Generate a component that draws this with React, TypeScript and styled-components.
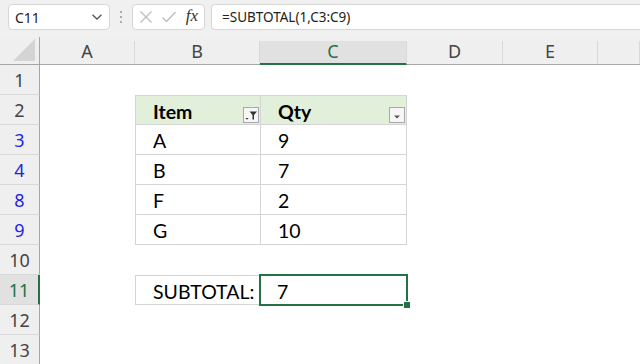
import React from "react";
import styled, { createGlobalStyle, css } from "styled-components";

const GlobalStyle = createGlobalStyle`
  html, body { margin: 0; padding: 0; background: #ffffff; }
  body { font-family: "Noto Sans", "Open Sans", sans-serif; overflow: hidden; }
  * { box-sizing: border-box; }
`;

const GREEN = "#217346";

const Window = styled.div`
  width: 640px;
  height: 364px;
  display: flex;
  flex-direction: column;
  background: #ffffff;
  overflow: hidden;
`;

const FormulaBar = styled.div`
  height: 37px;
  flex: none;
  display: flex;
  align-items: flex-start;
  padding: 4px 0 0 8px;
  background: #f0f0f0;
`;

const BoxBase = styled.div`
  height: 26px;
  background: #ffffff;
  border: 1px solid #d6d6d6;
  border-radius: 4px;
  display: flex;
  align-items: center;
`;

const NameBox = styled(BoxBase)`
  width: 102px;
  padding: 0 6px 0 6px;
  justify-content: space-between;
  font-size: 14px;
  color: #222;
`;

const Grip = styled.div`
  width: 22px;
  height: 26px;
  display: flex;
  align-items: center;
  justify-content: center;
`;

const FxBox = styled(BoxBase)`
  width: 73px;
  padding: 0 6px 0 6px;
  justify-content: space-between;
`;

const FxText = styled.span`
  font-family: "Liberation Serif", "DejaVu Serif", serif;
  font-style: italic;
  font-size: 17px;
  color: #333;
  margin-top: -2px;
`;

const FormulaInput = styled(BoxBase)`
  flex: 1;
  margin-left: 6px;
  margin-right: -8px;
  padding-left: 10px;
  font-size: 13.5px;
  color: #222;
  border-right: none;
  border-radius: 4px 0 0 4px;
`;

const Sheet = styled.div`
  flex: 1;
  display: flex;
  flex-direction: column;
`;

const HeaderRow = styled.div`
  height: 28px;
  display: flex;
  background: #efefef;
  border-bottom: 1px solid #a6a6a6;
`;

const Corner = styled.div`
  width: 40px;
  flex: none;
  border-right: 1px solid #a6a6a6;
  position: relative;
  display: flex;
  align-items: flex-end;
  justify-content: flex-end;
  padding: 0 4px 3px 0;
`;

const ColHeader = styled.div<{ $w?: number; $sel?: boolean }>`
  ${(p) => (p.$w ? css`width: ${p.$w}px; flex: none;` : css`flex: 1;`)}
  display: flex;
  align-items: center;
  justify-content: center;
  font-size: 18px;
  color: #444;
  border-right: 1px solid #d8d8d8;
  margin-top: 4px;
  padding-bottom: 4px;
  ${(p) =>
    p.$sel &&
    css`
      background: #e1e1e1;
      color: ${GREEN};
      border-bottom: 2px solid ${GREEN};
      margin-bottom: -1px;
      padding-bottom: 3px;
    `}
`;

const Row = styled.div`
  height: 30px;
  flex: none;
  display: flex;
`;

const RowHeader = styled.div<{ $blue?: boolean; $sel?: boolean }>`
  width: 40px;
  flex: none;
  display: flex;
  align-items: center;
  justify-content: center;
  background: #efefef;
  border-right: 1px solid #a6a6a6;
  border-bottom: 1px solid #d8d8d8;
  font-size: 18px;
  color: ${(p) => (p.$blue ? "#1f1fe6" : "#444")};
  ${(p) =>
    p.$sel &&
    css`
      background: #e1e1e1;
      color: ${GREEN};
      border-right: 2px solid ${GREEN};
    `}
`;

type Variant = "none" | "head" | "body";

const Cell = styled.div<{ $w?: number; $v?: Variant; $last?: boolean; $top?: boolean }>`
  ${(p) => (p.$w ? css`width: ${p.$w}px; flex: none;` : css`flex: 1;`)}
  position: relative;
  display: flex;
  align-items: center;
  padding-left: 17px;
  font-family: "Lato", "Noto Sans", sans-serif;
  font-size: 19.5px;
  color: #000;
  ${(p) =>
    p.$v && p.$v !== "none" &&
    css`
      border-bottom: 1px solid #d4d4d4;
      border-left: 1px solid #d4d4d4;
    `}
  ${(p) => p.$top && css`border-top: 1px solid #d4d4d4;`}
  ${(p) => p.$last && css`border-right: 1px solid #d4d4d4;`}
  ${(p) =>
    p.$v === "head" &&
    css`
      background: #e2efda;
      font-weight: 700;
    `}
`;

const CellText = styled.span`
  margin-top: 2px;
`;

const FilterButton = styled.div`
  position: absolute;
  right: 1px;
  top: 11px;
  width: 16px;
  height: 16px;
  border: 1px solid #a9a9a9;
  background: #f6f6f6;
  display: flex;
  align-items: center;
  justify-content: center;
`;

const Selection = styled.div`
  position: absolute;
  left: -1px;
  top: -1px;
  right: -1px;
  bottom: -1px;
  border: 2px solid ${GREEN};
  pointer-events: none;
`;

const FillHandle = styled.div`
  position: absolute;
  right: -4px;
  bottom: -4px;
  width: 6px;
  height: 6px;
  background: ${GREEN};
  border-left: 1px solid #fff;
  border-top: 1px solid #fff;
  box-sizing: content-box;
`;

const COLS = [
  { key: "A", w: 95 },
  { key: "B", w: 125 },
  { key: "C", w: 147 },
  { key: "D", w: 96 },
  { key: "E", w: 95 },
  { key: "F", w: 0 },
];

type RowDef = {
  n: number;
  b?: string;
  c?: string;
  kind?: "head" | "body" | "total";
  blue?: boolean;
};

const ROWS: RowDef[] = [
  { n: 1 },
  { n: 2, b: "Item", c: "Qty", kind: "head" },
  { n: 3, b: "A", c: "9", kind: "body", blue: true },
  { n: 4, b: "B", c: "7", kind: "body", blue: true },
  { n: 8, b: "F", c: "2", kind: "body", blue: true },
  { n: 9, b: "G", c: "10", kind: "body", blue: true },
  { n: 10 },
  { n: 11, b: "SUBTOTAL:", c: "7", kind: "total" },
  { n: 12 },
  { n: 13 },
];

const Chevron = () => (
  <svg width="12" height="8" viewBox="0 0 12 8">
    <path d="M1.5 1.8 L6 6 L10.5 1.8" fill="none" stroke="#555" strokeWidth="1.3" />
  </svg>
);

const Dots = () => (
  <svg width="4" height="14" viewBox="0 0 4 14">
    <circle cx="2" cy="2" r="1.1" fill="#9a9a9a" />
    <circle cx="2" cy="7" r="1.1" fill="#9a9a9a" />
    <circle cx="2" cy="12" r="1.1" fill="#9a9a9a" />
  </svg>
);

const Cross = () => (
  <svg width="14" height="14" viewBox="0 0 14 14">
    <path d="M1.5 1.5 L12.5 12.5 M12.5 1.5 L1.5 12.5" stroke="#bdbdbd" strokeWidth="1.3" fill="none" />
  </svg>
);

const Check = () => (
  <svg width="16" height="14" viewBox="0 0 16 14">
    <path d="M1.5 7.5 L5.5 11.5 L14.5 2" stroke="#bdbdbd" strokeWidth="1.3" fill="none" />
  </svg>
);

const CornerTriangle = () => (
  <svg width="22" height="22" viewBox="0 0 22 22">
    <path d="M22 0 L22 22 L0 22 Z" fill="#d4d4d4" />
  </svg>
);

const FunnelIcon = () => (
  <svg width="14" height="14" viewBox="0 0 14 14">
    <path d="M5.5 3.5 H13 L10 7 V11.5 H8.5 V7 Z" fill="#333" />
    <path d="M1.5 10 H4.5 L3 11.7 Z" fill="#333" />
  </svg>
);

const ArrowIcon = () => (
  <svg width="14" height="14" viewBox="0 0 14 14">
    <path d="M4 7.5 H10 L7 10.5 Z" fill="#555" />
  </svg>
);

export default function App() {
  return (
    <>
      <GlobalStyle />
      <Window>
        <FormulaBar>
          <NameBox>
            <span>C11</span>
            <Chevron />
          </NameBox>
          <Grip>
            <Dots />
          </Grip>
          <FxBox>
            <Cross />
            <Check />
            <FxText>fx</FxText>
          </FxBox>
          <FormulaInput>=SUBTOTAL(1,C3:C9)</FormulaInput>
        </FormulaBar>
        <Sheet>
          <HeaderRow>
            <Corner>
              <CornerTriangle />
            </Corner>
            {COLS.map((c) => (
              <ColHeader key={c.key} $w={c.w || undefined} $sel={c.key === "C"}>
                {c.key !== "F" ? c.key : ""}
              </ColHeader>
            ))}
          </HeaderRow>
          {ROWS.map((r) => {
            const isTotal = r.kind === "total";
            const v: Variant = r.kind === "head" ? "head" : r.kind ? "body" : "none";
            return (
              <Row key={r.n}>
                <RowHeader $blue={r.blue} $sel={isTotal}>
                  {r.n}
                </RowHeader>
                <Cell $w={95} />
                <Cell $w={125} $v={v} $top={r.kind === "head" || isTotal}>
                  {r.b && <CellText>{r.b}</CellText>}
                  {r.kind === "head" && (
                    <FilterButton>
                      <FunnelIcon />
                    </FilterButton>
                  )}
                </Cell>
                <Cell
                  $w={147}
                  $v={isTotal ? "none" : v}
                  $last={!!r.kind && !isTotal}
                  $top={r.kind === "head"}
                >
                  {r.c && <CellText>{r.c}</CellText>}
                  {r.kind === "head" && (
                    <FilterButton>
                      <ArrowIcon />
                    </FilterButton>
                  )}
                  {isTotal && (
                    <Selection>
                      <FillHandle />
                    </Selection>
                  )}
                </Cell>
                <Cell $w={96} />
                <Cell $w={95} />
                <Cell />
              </Row>
            );
          })}
        </Sheet>
      </Window>
    </>
  );
}
